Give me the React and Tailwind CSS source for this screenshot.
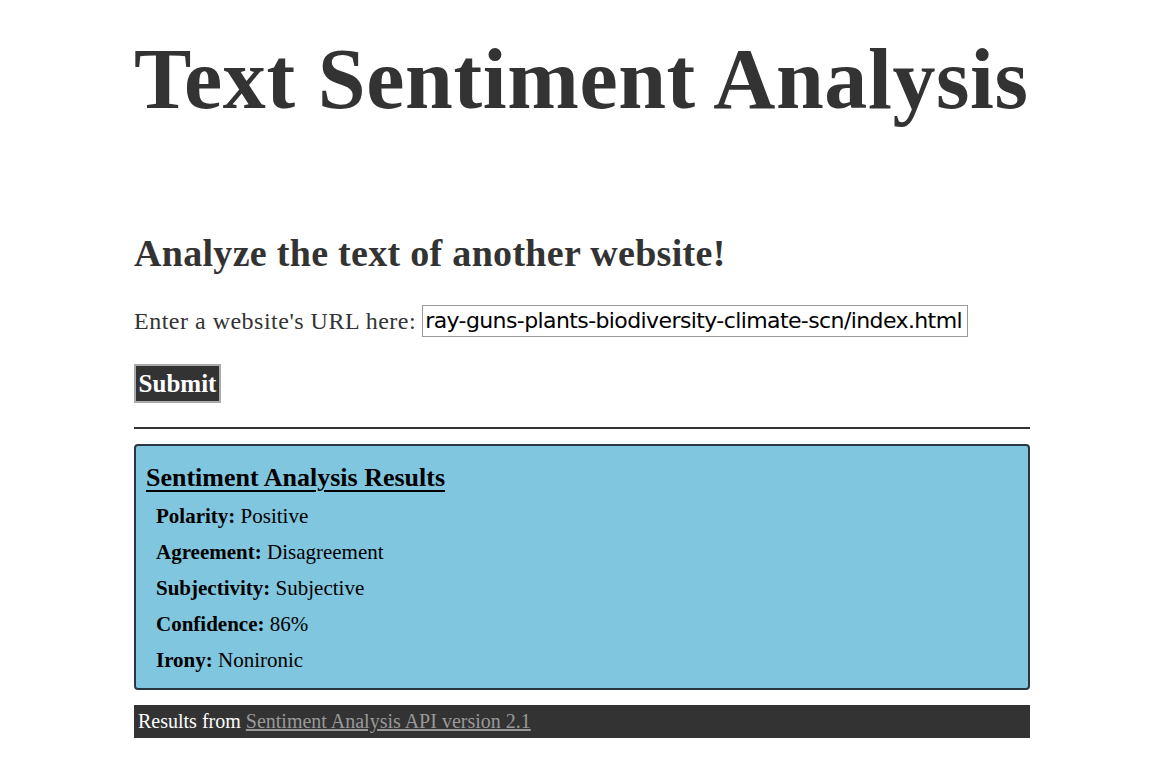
import React from 'react';

const results = [
  { label: 'Polarity:', value: 'Positive' },
  { label: 'Agreement:', value: 'Disagreement' },
  { label: 'Subjectivity:', value: 'Subjective' },
  { label: 'Confidence:', value: '86%' },
  { label: 'Irony:', value: 'Nonironic' },
];

export default function App() {
  return (
    <div className="min-h-screen bg-white text-[#333] font-['Liberation_Serif',serif]">
      <div className="ml-[134px] w-[896px]">
        {/* Title */}
        <h1 className="pt-[24px] whitespace-nowrap text-[86px] font-bold leading-[110px] tracking-[0.6px]">Text Sentiment Analysis</h1>

        {/* Form */}
        <h2 className="mt-[96px] text-[38px] font-bold leading-[46px] tracking-[0.3px]">Analyze the text of another website!</h2>
        <form className="mt-[29px]" onSubmit={(e) => e.preventDefault()}>
          <div className="flex items-center text-[24px] leading-[32px] tracking-[0.5px]">
            <span>Enter a website's URL here:</span>
            <input
              type="text"
              readOnly
              value="ray-guns-plants-biodiversity-climate-scn/index.html"
              className="ml-[6px] h-[32px] w-[546px] border border-[#999] bg-white px-[2px] text-[22px] text-black font-['DejaVu_Sans',sans-serif] tracking-[-0.6px] outline-none"
            />
          </div>
          <button
            type="submit"
            className="mt-[27px] h-[39px] w-[87px] border-2 border-[#aaa] bg-[#333] text-[25px] font-bold leading-[30px] text-white"
          >
            Submit
          </button>
        </form>

        <hr className="mt-[24px] border-t-2 border-[#333]" />

        {/* Results */}
        <div className="mt-[15px] rounded-[4px] border-2 border-[#2b3640] bg-[#80c6df] px-[10px] pt-[16px] pb-[10px] text-black">
          <h3 className="text-[26px] font-bold leading-[32px] underline underline-offset-[4px] decoration-[2px]">Sentiment Analysis Results</h3>
          <ul className="mt-[4px] pl-[10px]">
            {results.map((r) => (
              <li key={r.label} className="text-[21px] leading-[36px]">
                <b>{r.label}</b> {r.value}
              </li>
            ))}
          </ul>
        </div>

        <footer className="mt-[15px] bg-[#333] px-[4px] text-[20px] leading-[33px] text-white">
          Results from{' '}
          <a href="#" className="text-[#999] underline">Sentiment Analysis API version 2.1</a>
        </footer>
      </div>
    </div>
  );
}
